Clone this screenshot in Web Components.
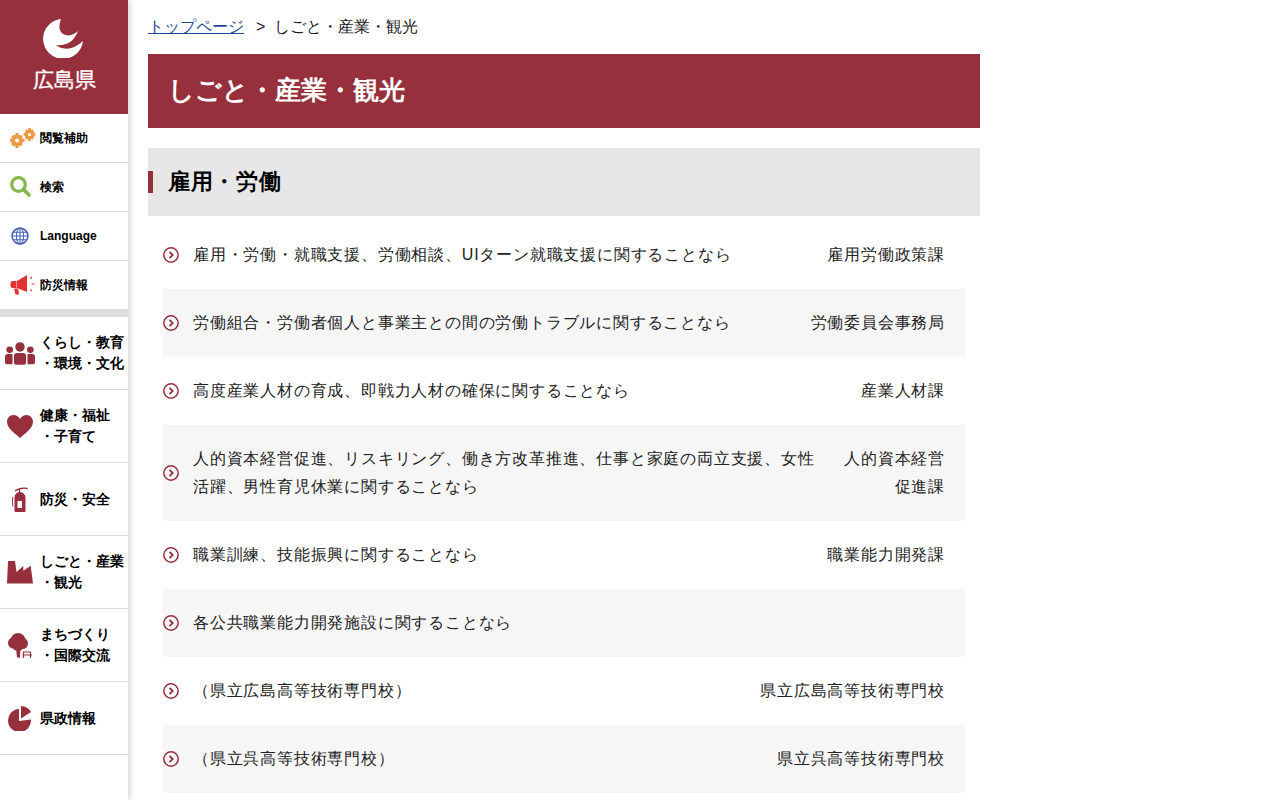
<!DOCTYPE html>
<html><head><meta charset="utf-8"><title>しごと・産業・観光</title>
<style>
html,body{margin:0;padding:0;background:#fff;height:800px;overflow:hidden;font-family:"Liberation Sans",sans-serif;color:#000}
body{display:flex}
</style></head><body>
<hk-sidebar>
<hk-logo></hk-logo>
<hk-tool label="閲覧補助" icon="gear"></hk-tool>
<hk-tool label="検索" icon="search"></hk-tool>
<hk-tool label="Language" icon="globe"></hk-tool>
<hk-tool label="防災情報" icon="mega"></hk-tool>
<hk-sep></hk-sep>
<hk-nav icon="people" a="くらし・教育" b="・環境・文化"></hk-nav>
<hk-nav icon="heart" a="健康・福祉" b="・子育て"></hk-nav>
<hk-nav icon="ext" a="防災・安全"></hk-nav>
<hk-nav icon="factory" a="しごと・産業" b="・観光"></hk-nav>
<hk-nav icon="tree" a="まちづくり" b="・国際交流"></hk-nav>
<hk-nav icon="pie" a="県政情報"></hk-nav>
</hk-sidebar>
<hk-main>
<hk-crumb></hk-crumb>
<hk-title>しごと・産業・観光</hk-title>
<hk-heading>雇用・労働</hk-heading>
<hk-list>
<hk-row dept="雇用労働政策課">雇用・労働・就職支援、労働相談、UIターン就職支援に関することなら</hk-row>
<hk-row dept="労働委員会事務局" shade>労働組合・労働者個人と事業主との間の労働トラブルに関することなら</hk-row>
<hk-row dept="産業人材課">高度産業人材の育成、即戦力人材の確保に関することなら</hk-row>
<hk-row dept="人的資本経営|促進課" shade>人的資本経営促進、リスキリング、働き方改革推進、仕事と家庭の両立支援、女性活躍、男性育児休業に関することなら</hk-row>
<hk-row dept="職業能力開発課">職業訓練、技能振興に関することなら</hk-row>
<hk-row shade>各公共職業能力開発施設に関することなら</hk-row>
<hk-row dept="県立広島高等技術専門校">（県立広島高等技術専門校）</hk-row>
<hk-row dept="県立呉高等技術専門校" shade>（県立呉高等技術専門校）</hk-row>
</hk-list>
</hk-main>
<script>
const ICONS={
gear:`<svg width="26" height="20" viewBox="0 0 26 20"><g fill="#ec9a45"><circle cx="7" cy="12.500" r="4" fill="none" stroke="#ec9a45" stroke-width="4"/><path d="M5.500 5h3v3h-3zM5.500 17h3v3h-3zM-.5 11h3v3h-3zM11.500 11h3v3h-3z"/><path d="M1.300 8.800l2-2 2 2-2 2zM8.700 8.800l2-2 2 2-2 2zM1.300 16.200l2 2 2-2-2-2zM8.700 16.200l2 2 2-2-2-2z"/><circle cx="19.500" cy="6.500" r="3.300" fill="none" stroke="#ec9a45" stroke-width="3.400"/><path d="M18.200 0h2.600v2.500h-2.600zM18.200 10.500h2.600V13h-2.600zM13.500 5.200h2.500v2.600h-2.500zM23 5.200h2.500v2.600H23zM15 2.900l1.600-1.600 1.600 1.600-1.600 1.600zM20.800 2.900l1.600-1.600 1.600 1.600-1.600 1.600zM15 10.100l1.600 1.600 1.600-1.600-1.600-1.600zM20.800 10.100l1.600 1.600 1.600-1.600-1.600-1.600z"/></g></svg>`,
search:`<svg width="22" height="22" viewBox="0 0 22 22"><circle cx="8.500" cy="8.500" r="6.800" fill="none" stroke="#84b84c" stroke-width="3.200"/><path d="M13.500 13.500l5.500 5.500" stroke="#84b84c" stroke-width="3.600" stroke-linecap="round"/></svg>`,
globe:`<svg style="margin-left:1px" width="18" height="18" viewBox="0 0 20 20" fill="none" stroke="#4a66b0" stroke-width="1.200"><circle cx="10" cy="10" r="8.800" stroke-width="1.800"/><ellipse cx="10" cy="10" rx="4" ry="8.800"/><path d="M10 1.200v17.600M1.200 10h17.600M2.600 5.800h14.800M2.600 14.200h14.800"/></svg>`,
mega:`<svg width="26" height="20" viewBox="0 0 26 20"><g fill="#e1322f"><path d="M17 0v17L7 13H2.500Q.5 13 .5 10V9Q.5 6 2.500 6H7z"/><path d="M4 13.500h4l1.200 6H5.500z"/></g><path d="M6.500 6.500v6" stroke="#f6b9b5" stroke-width=".8"/><path d="M20.500 3.500l1.500-1.500M21.500 9h3M20.500 14.500l1.500 1.500" stroke="#e1322f" stroke-width="1.200" fill="none"/></svg>`,
people:`<svg width="30" height="23" viewBox="0 0 32 24" fill="#96303c"><circle cx="16" cy="5" r="5"/><circle cx="5" cy="8" r="3.500"/><circle cx="27" cy="8" r="3.500"/><path d="M9.500 15q0-3.500 3.500-3.500h6q3.500 0 3.500 3.500v6q0 3-3 3h-7q-3 0-3-3z"/><path d="M0 16q0-3.500 3-3.500h4q1 0 1 1V23.500H3q-3 0-3-2.500zM32 16q0-3.500-3-3.500h-4q-1 0-1 1V23.500h5q3 0 3-2.500z"/></svg>`,
heart:`<svg width="26" height="23" viewBox="0 0 26 23" fill="#96303c"><path d="M13 23C9 19 0 14 0 6.800 0 2.800 3 0 6.500 0 9.500 0 12 1.700 13 4 14 1.700 16.500 0 19.500 0 23 0 26 2.800 26 6.800 26 14 17 19 13 23z"/></svg>`,
ext:`<svg width="16" height="25" viewBox="0 0 16 25" fill="#96303c"><path d="M3 4Q8 .2 15.800 1.500M7.500 2v4" stroke="#96303c" stroke-width="1.300" fill="none"/><path fill-rule="evenodd" d="M7.500 5Q13 5.500 13.500 10.500V24q0 1-1 1h-9q-1 0-1-1V10.500Q3 5.500 7.500 5zM5.500 14v7h4.500v-7z"/><path d="M.8 10Q-.2 15 1 19.500" stroke="#96303c" stroke-width="1" fill="none"/></svg>`,
factory:`<svg width="26" height="23" viewBox="0 0 26 23" fill="#96303c"><path d="M1 0H8L9.500 11 16.300 5V9.700L23.700 4.700 26 22.500H0z"/></svg>`,
tree:`<svg width="24" height="25" viewBox="0 0 24 25" fill="#96303c"><circle cx="10" cy="7.500" r="7.500"/><circle cx="5.500" cy="10" r="5.500"/><circle cx="14.500" cy="10.500" r="5.500"/><circle cx="10" cy="12" r="6"/><path d="M8 15L9 24.500H12L12.500 15z"/><path d="M15.500 22v-3h7v3M14.500 22h9.500M15.500 22v3M22.500 22v3" stroke="#96303c" stroke-width="1.200" fill="none"/></svg>`,
pie:`<svg width="24" height="25" viewBox="0 0 24 25" fill="#96303c"><path d="M11 3V15L23 13.500A11.500 11.500 0 1 1 11 3z"/><path d="M13 0Q20 .5 23 6L13 12.500z"/></svg>`
};
function def(name,css,html){customElements.define(name,class extends HTMLElement{constructor(){super();this.attachShadow({mode:'open'}).innerHTML=`<style>${css}</style>`+html}})}
def('hk-sidebar',`:host{display:flex;flex-direction:column;flex:none;width:128px;height:800px;background:#fff;box-shadow:2px 0 6px rgba(0,0,0,.18);position:relative;z-index:1}`,`<slot></slot>`);
def('hk-logo',`:host{display:flex;flex-direction:column;align-items:center;height:114px;background:#96303c;color:#fff;box-sizing:border-box;padding-top:17px}
svg{display:block}
span{font-size:21px;line-height:24px;margin-top:10px;-webkit-text-stroke:.35px #fff}`,
`<svg width="42" height="41" viewBox="0 0 42 41" fill="#fff"><path d="M18 2A20 20 0 1 0 40 24Q26 37 12 28 29 30 35 14 27 21 20 17 14 12.500 18 2z"/></svg><span>広島県</span>`);
customElements.define('hk-tool',class extends HTMLElement{connectedCallback(){if(this.shadowRoot)return;this.attachShadow({mode:'open'}).innerHTML=`<style>:host{display:flex;align-items:center;height:49px;box-sizing:border-box;border-bottom:1px solid #ddd}
i{display:flex;align-items:center;width:26px;flex:none;margin:0 4px 0 10px}
b{font-size:12px;font-weight:700;line-height:16px}</style><i>${ICONS[this.getAttribute('icon')]}</i><b>${this.getAttribute('label')}</b>`}});
def('hk-sep',`:host{display:block;height:8px;background:#ddd;margin-top:-1px}`,``);
customElements.define('hk-nav',class extends HTMLElement{connectedCallback(){if(this.shadowRoot)return;const a=this.getAttribute('a'),b=this.getAttribute('b');this.attachShadow({mode:'open'}).innerHTML=`<style>:host{display:flex;align-items:center;height:73px;box-sizing:border-box;border-bottom:1px solid #ddd}
i{display:flex;align-items:center;justify-content:center;width:40px;flex:none}
div{font-size:14px;font-weight:700;line-height:21px;white-space:nowrap}
span{display:block}</style><i>${ICONS[this.getAttribute('icon')]}</i><div><span>${a}</span>${b?`<span>${b}</span>`:''}</div>`}});
def('hk-main',`:host{display:block;width:832px;margin-left:20px;flex:none}`,`<slot></slot>`);
def('hk-crumb',`:host{display:flex;align-items:center;height:54px;font-size:16px;box-sizing:border-box;color:#1a1a1a}
a{color:#1c4a94;text-decoration:underline}span{margin-left:12px}`,`<a href="#">トップページ</a><span>&gt;&nbsp;&nbsp;しごと・産業・観光</span>`);
def('hk-title',`:host{display:flex;align-items:center;height:74px;box-sizing:border-box;padding:0 0 2px 20px;background:#96303c;color:#fff;font-size:26.400px;font-weight:700}`,`<slot></slot>`);
def('hk-heading',`:host{display:flex;align-items:center;height:68px;box-sizing:border-box;padding:0 0 2px 20px;margin-top:20px;background:#e7e7e7;font-size:22.400px;letter-spacing:.7px;font-weight:700;position:relative}
u{position:absolute;left:0;top:23px;width:5px;height:22px;background:#96303c}`,`<u></u><slot></slot>`);
def('hk-list',`:host{display:block;padding:5px 15px 0}`,`<slot></slot>`);
customElements.define('hk-row',class extends HTMLElement{connectedCallback(){if(this.shadowRoot)return;const d=(this.getAttribute('dept')||'').split('|').join('<br>');this.attachShadow({mode:'open'}).innerHTML=`<style>:host{display:flex;align-items:center;box-sizing:border-box;padding:20px 0;font-size:16px;line-height:28px;letter-spacing:.8px;color:#222}
:host([shade]){background:#f6f6f6}
svg{flex:none;margin-right:14px}
.t{flex:0 1 auto;min-width:0;max-width:630px}
.d{flex:1 0 auto;text-align:right;margin-right:20px;white-space:nowrap}
</style><svg width="16" height="16" viewBox="0 0 16 16" fill="none" stroke="#96303c"><circle cx="8" cy="8" r="7.200" stroke-width="1.500"/><path d="M6.500 4.800L9.700 8 6.500 11.200" stroke-width="1.800"/></svg><div class="t"><slot></slot></div><div class="d">${d}</div>`}});
</script>
</body></html>
